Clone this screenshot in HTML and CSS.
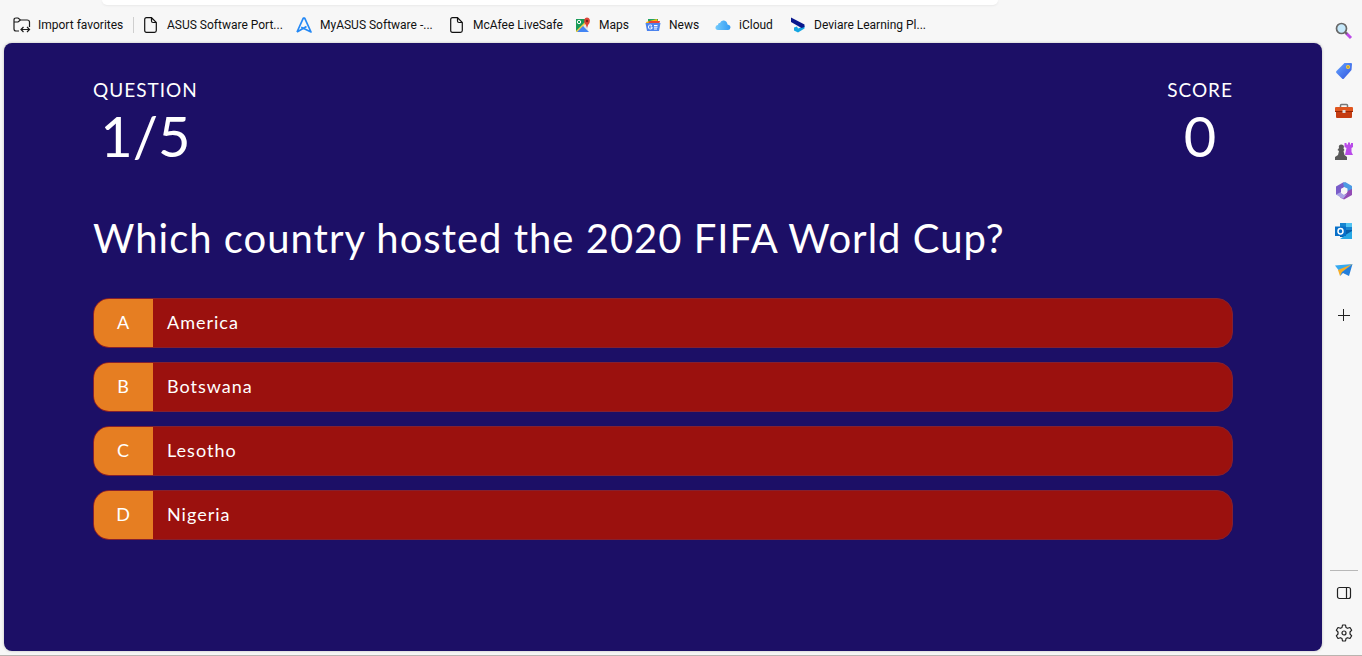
FILE: index.html
```html
<!DOCTYPE html>
<html lang="en">
<head>
<meta charset="utf-8">
<meta name="viewport" content="width=device-width, initial-scale=1">
<title>Quiz</title>
<link rel="stylesheet" href="styles.css">
</head>
<body>
<div class="browser">
  <div class="window">
    <header class="toolbar">
      <div class="address-edge"></div>
      <nav class="favorites" aria-label="Favorites">
        <button class="favorite import" type="button">
          <svg class="icon-wide" viewBox="0 0 18 16" fill="none" stroke="#1b1b1b" stroke-width="1.2"><path d="M6 14H3Q1 14 1 12V3Q1 1 3 1H5L7.500 3H14Q16.500 3 16.500 5V10M1 5H5L7.500 3M8 12.500H16.500M10.500 10L8 12.500L10.500 15M14 10L16.500 12.500L14 15"/></svg>
          <span>Import favorites</span>
        </button>
        <a class="favorite long" href="#">
          <svg class="icon" viewBox="0 0 16 16" fill="none" stroke="#111" stroke-width="1.200"><path d="M3.500 .700H8.500L13.300 5.500V13.500Q13.300 15.300 11.500 15.300H3.500Q1.700 15.300 1.700 13.500V2.500Q1.700 .7 3.500 .7ZM8.500 .7V4Q8.500 5.500 10 5.500H13.300"/></svg>
          <span>ASUS Software Port...</span>
        </a>
        <a class="favorite long" href="#">
          <svg class="icon" viewBox="0 0 16 16" fill="none" stroke="#2589f5" stroke-width="1.700" stroke-linejoin="round"><path d="M1 15L7.300 1.200H8.700L15 15L5.200 10.200M1 15L10.500 9.500"/></svg>
          <span>MyASUS Software -...</span>
        </a>
        <a class="favorite medium" href="#">
          <svg class="icon" viewBox="0 0 16 16" fill="none" stroke="#111" stroke-width="1.200"><path d="M3.500 .700H8.500L13.300 5.500V13.500Q13.300 15.300 11.500 15.300H3.500Q1.700 15.300 1.700 13.500V2.500Q1.700 .7 3.500 .7ZM8.500 .7V4Q8.500 5.500 10 5.500H13.300"/></svg>
          <span>McAfee LiveSafe</span>
        </a>
        <a class="favorite short" href="#">
          <svg class="icon" viewBox="0 0 16 16"><path fill="#189b58" d="M1 2H12V8L2 14H1Z"/><path fill="#f6cf48" d="M1 14L11 4L13 6L3 15H1Z"/><path fill="#e5e7e9" d="M8 9L13 5V14Z"/><path fill="#4285f4" d="M2 15L8 9L14 15Z"/><circle cx="4" cy="5" r="1.700" fill="none" stroke="#fff"/><path fill="#db4437" d="M12 11Q11.500 8 9.500 6Q8 1 12 .500Q16 1 14.500 6Q12.500 8 12 11Z"/><circle cx="12" cy="4" r="1.200" fill="#7c211c"/></svg>
          <span>Maps</span>
        </a>
        <a class="favorite short" href="#">
          <svg class="icon" viewBox="0 0 16 16"><path fill="#21a464" d="M3 2H13V8H3Z"/><path fill="#fbbc04" d="M1 5L12 2L14 8H2Z"/><path fill="#ea4335" d="M4 4H15L14 8H3Z"/><path fill="#4c83ed" d="M.5 6H15.500L14 14H2Z"/><path d="M7 8.500Q3.500 7 3.500 10Q3.500 13 7 11.500V10H5.500M9 8.500H12.500M9 10.200H12.500M9 12H12" fill="none" stroke="#fff"/></svg>
          <span>News</span>
        </a>
        <a class="favorite cloud" href="#">
          <svg class="icon" viewBox="0 0 16 16"><defs><linearGradient id="cloud"><stop stop-color="#73cafb"/><stop offset="1" stop-color="#319bf4"/></linearGradient></defs><path fill="url(#cloud)" d="M3 13Q0 12.500 .5 10Q1 8 3 8Q3 5.500 5 6Q6 3 9 3.500Q12 4 12.500 7.500Q15.500 8 15.500 10.500Q15 13 13 13Z"/></svg>
          <span>iCloud</span>
        </a>
        <a class="favorite" href="#">
          <svg class="icon" viewBox="0 0 16 16"><path fill="#13a6e2" d="M14.500 9V11.500L8 15.500L4 13.500V10.500L7 9.500L8 11.500Z"/><path fill="#08178d" d="M1 .5L14.500 7.500V10L11.500 11L1 5Z"/></svg>
          <span>Deviare Learning Pl...</span>
        </a>
      </nav>
    </header>
    <main class="page">
      <div class="quiz">
        <div class="status">
          <div class="stat"><p class="stat-label">QUESTION</p><p class="stat-value">1/5</p></div>
          <div class="stat"><p class="stat-label">SCORE</p><p class="stat-value">0</p></div>
        </div>
        <h1 class="question">Which country hosted the 2020 FIFA World Cup?</h1>
        <div class="choices">
          <button class="choice" type="button"><span class="letter">A</span><span class="answer">America</span></button>
          <button class="choice" type="button"><span class="letter">B</span><span class="answer">Botswana</span></button>
          <button class="choice" type="button"><span class="letter">C</span><span class="answer">Lesotho</span></button>
          <button class="choice" type="button"><span class="letter">D</span><span class="answer">Nigeria</span></button>
        </div>
      </div>
    </main>
  </div>
  <aside class="sidebar" aria-label="Sidebar">
    <div class="tools">
      <button class="tool" type="button" aria-label="Search"><svg viewBox="0 0 18 18"><path d="M11 11L16 16" stroke="#bd4be8" stroke-width="3"/><path d="M10 10L12 12" stroke="#666" stroke-width="2"/><circle cx="6.500" cy="6.500" r="5" fill="#c6e9fb" stroke="#686868" stroke-width="1.700"/></svg></button>
      <button class="tool" type="button" aria-label="Shopping"><svg viewBox="0 0 18 18"><defs><linearGradient id="tag" x2="1" y2="1"><stop stop-color="#64a5ff"/><stop offset="1" stop-color="#3354de"/></linearGradient></defs><path fill="url(#tag)" d="M9.500 1H16Q17 1 17 2L16.500 8L9 16.500Q8 17.500 7 16.500L1.500 11Q.5 10 1.500 9Z"/><circle cx="13" cy="5" r="2" fill="#ffd12e"/><circle cx="13" cy="5" r=".8" fill="#806a40"/></svg></button>
      <button class="tool" type="button" aria-label="Tools"><svg viewBox="0 0 18 18"><path d="M5.500 6V3.500Q5.500 2.500 6.500 2.500H11.500Q12.500 2.500 12.500 3.500V6" fill="none" stroke="#777" stroke-width="1.500"/><path fill="#e0561f" d="M0 6Q0 5 1 5H17Q18 5 18 6V10H0Z"/><path fill="#c53c12" d="M1 10H17V15Q17 16 16 16H2Q1 16 1 15Z"/><path stroke="#962709" d="M0 9.500H18"/><path fill="#ddd" d="M7.500 8H10.500V11H7.500Z"/></svg></button>
      <button class="tool" type="button" aria-label="Games"><svg viewBox="0 0 18 18"><path fill="#b94be9" d="M9.500 1H11.500V2.500H13V.500H15V2.500H16V1H18V5L16.500 6V10L18 13H10L11.500 6L9.500 5Z"/><path fill="#595959" d="M4 6Q3 2.500 6.500 2.500Q10 3 8.500 6.500L9.500 8L8.500 9L9.500 13L12 15V18H0V15L3 13L4 9L2.500 8Z"/></svg></button>
      <button class="tool" type="button" aria-label="Microsoft 365"><svg viewBox="0 0 18 18"><path fill="#7a5cc9" d="M8 .5L1 4.500V13L6 11V7L11 4V.5Z"/><path fill="#4c9be4" d="M8 .5H11L17 4V12L12.500 9V6.500L9 5Z"/><path fill="#934bb5" d="M17 7V13L9 17.500L5 15.500L9 13L12.500 10V9Z"/><path fill="#a9a2e6" d="M1 12.500L6 10L9 13L12 12L8 17Z"/><path fill="#f7f7f7" d="M9 5.500L12 7V11L9 12.500L6 11V7Z"/></svg></button>
      <button class="tool" type="button" aria-label="Outlook"><svg viewBox="0 0 18 18"><path fill="#1685d1" d="M5 1H17V12H5Z"/><path fill="#50c3f2" d="M11 1H17V5H11Z"/><path fill="#085eaa" d="M5 8H17V15H5Z"/><path fill="#28a8e5" d="M17 9V17H5L12 12Z"/><path fill="#0870c9" d="M0 4.500H11V14H0Z"/><ellipse cx="5.500" cy="9.200" rx="2.500" ry="2.700" fill="none" stroke="#fff" stroke-width="1.500"/></svg></button>
      <button class="tool" type="button" aria-label="Drop"><svg viewBox="0 0 18 18"><path fill="#36a9f0" d="M0 3.500L17.500 2L5 10Z"/><path fill="#f6ad27" d="M3 8L17.500 2L7 11L5 14Z"/><path fill="#237fdc" d="M17.500 2L14 14L8 11L5 14L7 10Z"/></svg></button>
      <button class="tool add" type="button" aria-label="Add"><svg viewBox="0 0 18 18"><path d="M8.500 3V15M3 9.500H15" stroke="#222"/></svg></button>
    </div>
    <div class="tools lower">
      <button class="tool" type="button" aria-label="Toggle sidebar"><svg viewBox="0 0 18 18" fill="none" stroke="#222" stroke-width="1.200"><rect x="2.500" y="3.500" width="13" height="11" rx="2"/><path d="M11.500 3.500V14.500"/></svg></button>
      <button class="tool" type="button" aria-label="Settings"><svg viewBox="0 0 18 18" fill="none" stroke="#222" stroke-width="1.200" stroke-linejoin="round"><path d="M7.500 1H10.500L11 3.500L12.500 4.300L15 3.500L16.700 6.200L15 8V10L16.700 11.800L15 14.500L12.500 13.700L11 14.500L10.500 17H7.500L7 14.500L5.500 13.700L3 14.500L1.300 11.800L3 10V8L1.300 6.200L3 3.500L5.500 4.300L7 3.500Z"/><circle cx="9" cy="9" r="2"/></svg></button>
    </div>
  </aside>
</div>
</body>
</html>
```
FILE: styles.css
```css
* { box-sizing: border-box; }
body { margin: 0; background: #f7f7f7; color: #111; }
button { font: inherit; color: inherit; border: 0; background: none; padding: 0; cursor: pointer; }
p, h1 { margin: 0; font-weight: 400; }
.browser { display: flex; min-height: 100vh; padding-left: 4px; border-bottom: 1px solid #b9b4b0; }
.window { flex: 1; min-width: 0; display: flex; flex-direction: column; padding-bottom: 4px; }

.toolbar { height: 43px; }
.address-edge { height: 5px; margin: 0 324px 0 98px; background: #fff; border-radius: 0 0 16px 16px; box-shadow: 0 1px 2px #e9e9e9; }
.favorites { display: flex; height: 38px; padding: 0 0 0 9px; font: 12px/16px Roboto, "Open Sans", sans-serif; white-space: nowrap; }
.favorite { display: flex; flex: none; align-items: center; gap: 8px; height: 40px; color: #111; text-decoration: none; }
.icon { width: 16px; height: 16px; flex: none; }
.icon-wide { width: 18px; height: 16px; flex: none; }
.import { width: 130px; gap: 7px; background: linear-gradient(#cfcfcf, #cfcfcf) no-repeat 120px 12px / 1px 16px; }
.long { width: 153px; }
.medium { width: 126px; }
.short { width: 70px; }
.cloud { width: 75px; }

.page { flex: 1; padding: 34px 32px 32px; border-radius: 8px; background: #1c0f66; color: #fff; font-family: Lato, sans-serif; box-shadow: 0 0 3px #bbb; }
.quiz { max-width: 1140px; margin: 0 auto; }
.status { display: flex; justify-content: space-between; }
.stat { text-align: center; }
.stat-label { font-size: 19px; line-height: 26px; letter-spacing: 1px; }
.stat-value { font-size: 56px; line-height: 66px; }
.question { margin-top: 44px; font-size: 40px; line-height: 50px; letter-spacing: 1px; }
.choices { display: grid; gap: 14px; margin-top: 35px; }
.choice { display: flex; height: 50px; overflow: hidden; border: 1px solid #842030; border-radius: 16px; background: #9b110e; color: #fff; font-size: 18px; line-height: 24px; letter-spacing: 1px; text-align: left; }
.letter { display: grid; place-items: center; width: 59px; height: 100%; padding-bottom: 2px; background: #e67e22; }
.answer { align-self: center; padding: 0 14px 2px; }

.sidebar { display: flex; flex-direction: column; justify-content: space-between; width: 40px; padding: 11px 4px 2px 8px; }
.tools { display: grid; justify-items: center; }
.tool { display: grid; place-items: center; width: 28px; height: 40px; }
.tool svg { width: 18px; height: 18px; }
.add { height: 48px; }
.lower { border-top: 1px solid #b8b8b8; padding-top: 2px; }
```
